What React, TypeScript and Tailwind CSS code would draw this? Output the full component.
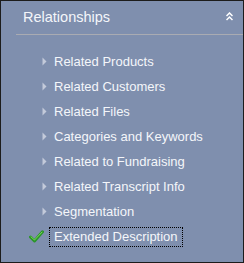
import React from "react";

const items = [
  "Related Products",
  "Related Customers",
  "Related Files",
  "Categories and Keywords",
  "Related to Fundraising",
  "Related Transcript Info",
  "Segmentation",
];

function Arrow() {
  return (
    <svg width="5" height="9" viewBox="0 0 5 9" className="shrink-0">
      <path d="M0.5 0.5 L4.5 4.5 L0.5 8.5 Z" fill="#c3cada" />
    </svg>
  );
}

function Check() {
  return (
    <svg width="15" height="13" viewBox="0 0 15 13" className="shrink-0">
      <path d="M1.5 7 L5.5 11 L13.5 1.8" stroke="#2a952a" strokeWidth="3" fill="none" strokeLinecap="round" strokeLinejoin="round" />
      <path d="M2 6.8 L5.5 10 L13 2.1" stroke="#86e060" strokeWidth="0.9" fill="none" strokeLinecap="round" />
    </svg>
  );
}

export default function App() {
  return (
    <div
      className="w-[244px] h-[263px] bg-[#7f8fae] border border-[#1c1c1c] text-[#f4f6fa] overflow-hidden"
      style={{ fontFamily: '"Liberation Sans", Arial, sans-serif' }}
    >
      <div className="flex items-center justify-between ml-[15px] pl-[7px] pr-[10px] h-[34px] border-b border-[#a9abb2] pb-[1px]">
        <span className="text-[14.5px] leading-none">Relationships</span>
        <svg width="7" height="9" viewBox="0 0 7 9" className="mb-[2px]">
          <path d="M0.5 4 L3.5 1 L6.5 4 M0.5 8 L3.5 5 L6.5 8" stroke="#fff" strokeWidth="1.5" fill="none" />
        </svg>
      </div>
      <div className="flex flex-col pt-[14px]">
        {items.map((t) => (
          <div key={t} className="flex items-center h-[25px] pl-[41px] gap-[7px]">
            <Arrow />
            <span className="text-[13px] leading-none">{t}</span>
          </div>
        ))}
        <div className="flex items-center h-[25px] pl-[28px] gap-[5px]">
          <Check />
          <span className="text-[13px] leading-none border border-dotted border-black px-[4px] pt-[2px] pb-[3px]">
            Extended Description
          </span>
        </div>
      </div>
    </div>
  );
}
